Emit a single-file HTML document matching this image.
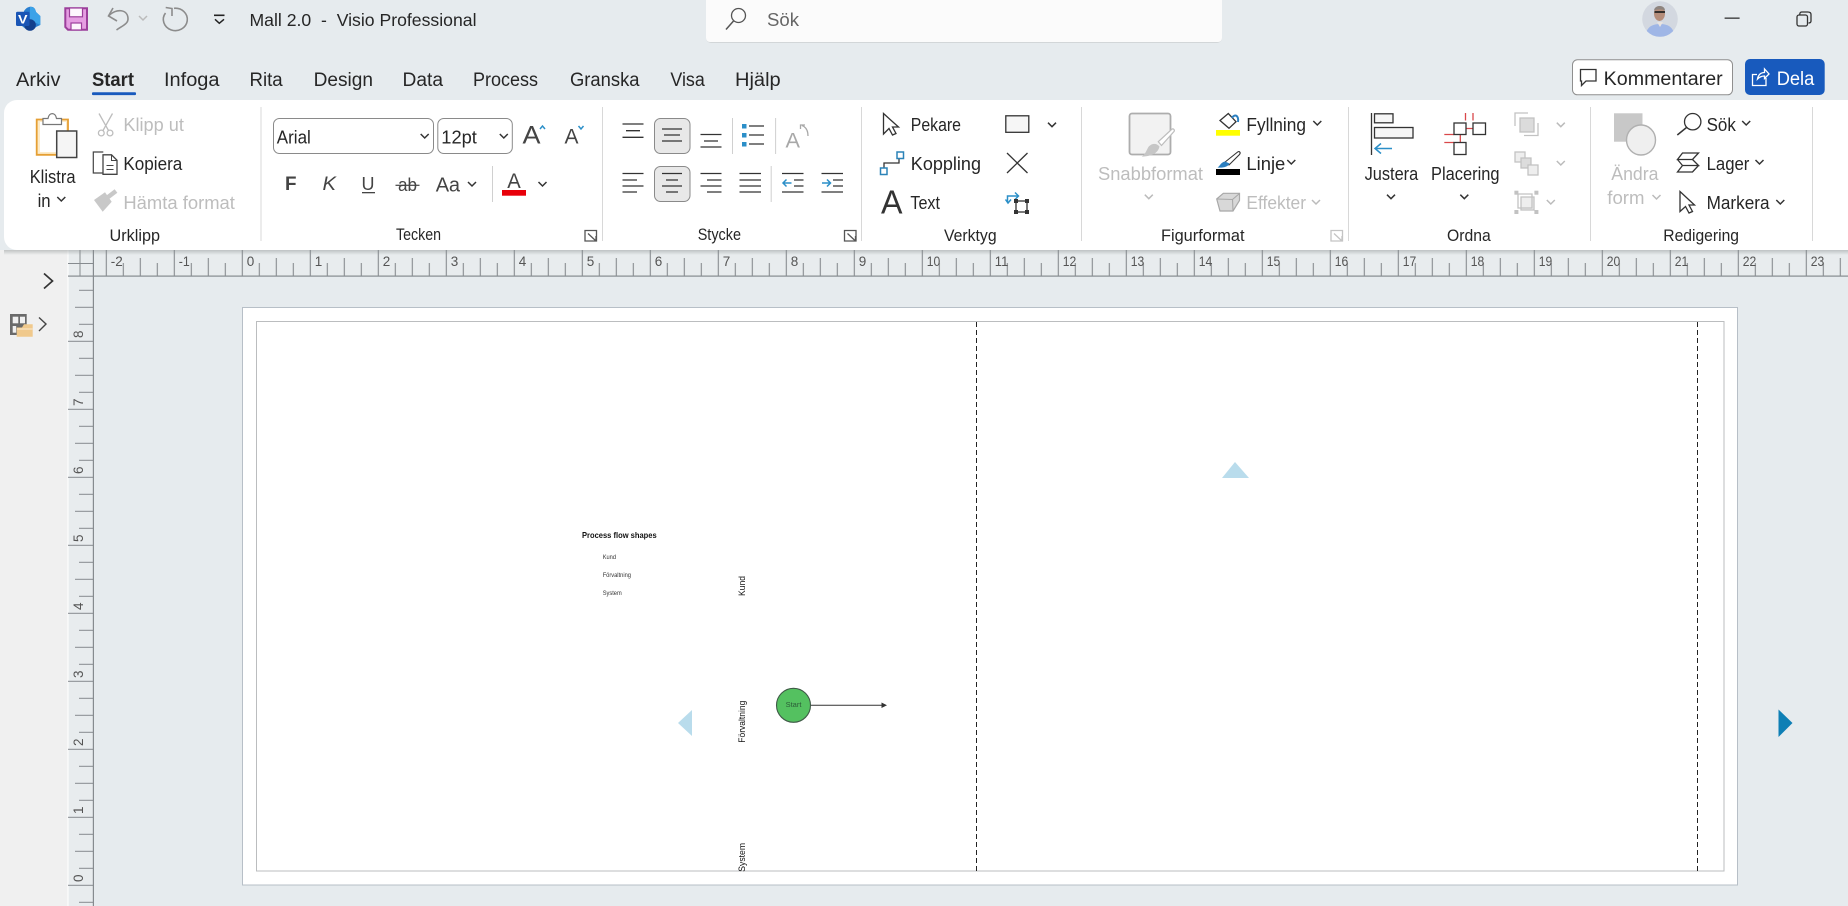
<!DOCTYPE html>
<html lang="sv">
<head>
<meta charset="utf-8">
<title>Mall 2.0 - Visio Professional</title>
<style>
html,body{margin:0;padding:0;width:1848px;height:906px;overflow:hidden;background:#e6ebee}
svg{display:block}
text{font-family:"Liberation Sans",sans-serif;font-size:18.5px;fill:#262626}
.r text{font-size:13.5px;fill:#555}
</style>
</head>
<body>
<svg width="1848" height="906" viewBox="0 0 1848 906" xmlns="http://www.w3.org/2000/svg">
<defs>
<path id="c" d="M-4-2 0 2 4-2" fill="none" stroke="#333" stroke-width="1.5"/>
<path id="cg" d="M-4-2 0 2 4-2" fill="none" stroke="#bbb" stroke-width="1.5"/>
<pattern id="pt" patternUnits="userSpaceOnUse" x="96.3" y="250" width="68" height="26">
<path d="M10 0V26M27 13V26M44 8V26M61 13V26" stroke="#868b8f" stroke-width="1.1" fill="none"/>
</pattern>
<pattern id="pv" patternUnits="userSpaceOnUse" x="68" y="263.3" width="25" height="68">
<path d="M0 10H25M11 27H25M7 44H25M11 61H25" stroke="#868b8f" stroke-width="1.1" fill="none"/>
</pattern>
<linearGradient id="sh" x1="0" y1="0" x2="0" y2="1"><stop offset="0" stop-color="#9aa0a0" stop-opacity=".55"/><stop offset="1" stop-color="#9aa0a0" stop-opacity="0"/></linearGradient>
<clipPath id="av"><circle cx="1660" cy="19" r="17.8"/></clipPath>
</defs>

<!-- backgrounds -->
<rect width="1848" height="906" fill="#e6ebee"/>
<rect x="0" y="250" width="68" height="656" fill="#f0f0f0"/>
<rect x="68" y="250" width="1780" height="26" fill="#e8ecee"/>
<rect x="68" y="250" width="25" height="656" fill="#e8ecee"/>
<rect x="67.5" y="250" width="1" height="656" fill="#fff"/>

<!-- title bar -->
<path d="M24 11C26 8 28 6.7 31 6.7C34 6.7 35.500 9 36 12L40.300 16V25L36 27C34 30 30 31 27 30L22 26z" fill="#2a7fd0"/>
<path d="M30 6.700C33.500 6.700 35.500 9 36 12L40.300 16V25L30 20z" fill="#3ba2e8"/>
<circle cx="30" cy="25" r="5.800" fill="#123f8c"/>
<rect x="16" y="11.700" width="13.500" height="14.300" rx="1.500" fill="#1a55b5"/>
<text x="18" y="23.300" style="font-size:11.500px;font-weight:bold;fill:#fff" textLength="9.500" lengthAdjust="spacingAndGlyphs">V</text>

<path d="M65.300 8.300H87V29.700H68L65.300 27z" fill="#e59ee2" stroke="#9c3f9b" stroke-width="2"/>
<rect x="69.500" y="8" width="13" height="8.800" fill="#fdf6fd" stroke="#9c3f9b" stroke-width="1.200"/>
<rect x="71" y="23" width="10.500" height="7" fill="#fdf6fd" stroke="#9c3f9b" stroke-width="1.200"/>

<g fill="none" stroke="#8c8c8c" stroke-width="1.600">
<path d="M113 8 108.500 16 117 21"/>
<path d="M108.500 16C116 8 128 9 128 19C128 24 122 26 116.500 30"/>
<path d="M165.500 13A12 11.200 0 1 0 174 8.300"/>
<path d="M165.700 7.500 172 8.500 172 16"/>
</g>
<use href="#cg" x="143" y="18"/>
<path d="M214 15.300H224.500" stroke="#222" stroke-width="1.600"/>
<path d="M215 19.300 219.300 23.300 224 19.300" fill="none" stroke="#222" stroke-width="1.500"/>
<text x="249.500" y="26" style="font-size:17.5px" textLength="227" lengthAdjust="spacingAndGlyphs" xml:space="preserve">Mall 2.0  -  Visio Professional</text>

<!-- search -->
<rect x="706" y="-6" width="516" height="49" rx="5" fill="#d2d6d8"/>
<rect x="706" y="-6" width="516" height="48" rx="4" fill="#fbfbfb"/>
<circle cx="738.500" cy="15.500" r="7" fill="none" stroke="#555" stroke-width="1.300"/>
<path d="M733.500 21 726 29.500" stroke="#555" stroke-width="1.500"/>
<text x="767" y="26" style="font-size:18.5px;fill:#666" textLength="32" lengthAdjust="spacingAndGlyphs">Sök</text>

<!-- avatar -->
<g clip-path="url(#av)">
<rect x="1641" y="0" width="38" height="38" fill="#d3d8e0"/>
<path d="M1645 38C1646 27 1652 24 1660 24S1674 27 1675 38z" fill="#9fb6e6"/>
<path d="M1657 22H1663L1660 27z" fill="#e8e3e0"/>
<ellipse cx="1659.500" cy="13.500" rx="5.500" ry="7.500" fill="#b58d7a"/>
<path d="M1654 10.500C1654.500 4.500 1665 4.500 1665 10.500C1662 9 1657 9 1654 10.500z" fill="#8d8580"/>
<path d="M1654.500 12H1665" stroke="#222" stroke-width="1.800"/>
</g>

<!-- window controls -->
<rect x="1724.600" y="17.500" width="15" height="1.300" fill="#333"/>
<rect x="1797" y="15" width="10.500" height="11" rx="2" fill="none" stroke="#333" stroke-width="1.300"/>
<path d="M1799.800 15V14C1799.800 12.700 1800.800 12 1801.800 12H1807.800C1809.800 12 1811 13 1811 14.500V21C1811 22.500 1810 23 1808.500 23" fill="none" stroke="#333" stroke-width="1.300"/>

<!-- tabs -->
<text x="16" y="86" style="font-size:19px" textLength="44.500" lengthAdjust="spacingAndGlyphs">Arkiv</text>
<text x="92" y="86" style="font-size:19px;font-weight:bold" textLength="42" lengthAdjust="spacingAndGlyphs">Start</text>
<text x="164" y="86" style="font-size:19px" textLength="55.500" lengthAdjust="spacingAndGlyphs">Infoga</text>
<text x="249.500" y="86" style="font-size:19px" textLength="33.200" lengthAdjust="spacingAndGlyphs">Rita</text>
<text x="313.600" y="86" style="font-size:19px" textLength="59.400" lengthAdjust="spacingAndGlyphs">Design</text>
<text x="402.500" y="86" style="font-size:19px" textLength="40.500" lengthAdjust="spacingAndGlyphs">Data</text>
<text x="473" y="86" style="font-size:19px" textLength="65" lengthAdjust="spacingAndGlyphs">Process</text>
<text x="570" y="86" style="font-size:19px" textLength="69.500" lengthAdjust="spacingAndGlyphs">Granska</text>
<text x="670.400" y="86" style="font-size:19px" textLength="34.400" lengthAdjust="spacingAndGlyphs">Visa</text>
<text x="735" y="86" style="font-size:19px" textLength="45.700" lengthAdjust="spacingAndGlyphs">Hjälp</text>
<rect x="92" y="92.300" width="44" height="2.800" rx="1" fill="#185abd"/>

<!-- comment / share -->
<rect x="1572.500" y="59.800" width="160" height="35" rx="5" fill="#fff" stroke="#8f8f8f"/>
<path d="M1580.500 69.500H1596V81H1586L1581.500 85.500V81H1580.500z" fill="none" stroke="#333" stroke-width="1.300"/>
<text x="1603.700" y="85" style="font-size:19px" textLength="119" lengthAdjust="spacingAndGlyphs">Kommentarer</text>
<rect x="1745" y="59" width="79.700" height="36" rx="5" fill="#185abd"/>
<path d="M1766 78V85.500H1752.500V74.500H1757M1757.500 79C1758.500 74 1761.500 72.500 1764.500 72.500V69L1769 74 1764.500 78.500V76C1761.500 76 1759.500 77 1757.500 79z" fill="none" stroke="#fff" stroke-width="1.300"/>
<text x="1776.700" y="85" style="font-size:19px;fill:#fff" textLength="37.600" lengthAdjust="spacingAndGlyphs">Dela</text>

<!-- ribbon -->
<rect x="4" y="250" width="1844" height="5" fill="url(#sh)"/>
<rect x="4" y="100" width="1860" height="150" rx="13" fill="#fff"/>
<path d="M261 107V241M602.500 107V241M861.500 107V241M1081.500 107V241M1348.500 107V241M1590.500 107V241M1812.500 107V241" stroke="#d8d8d8" stroke-width="1"/>

<!-- Urklipp -->
<path d="M36.700 119.500H68V154.800H36.700z" fill="#fdebc8" stroke="#e59f34" stroke-width="1.800"/>
<rect x="40" y="122" width="26" height="30" fill="#fff"/>
<path d="M43 124.500V118.500H48C49 112 55.500 112 56.500 118.500H61.500V124.500z" fill="#fff" stroke="#777" stroke-width="1.200"/>
<rect x="56.700" y="131" width="20" height="26.500" fill="#f5f5f5" stroke="#444" stroke-width="1.500"/>
<text x="29.700" y="183" textLength="45.800" lengthAdjust="spacingAndGlyphs">Klistra</text>
<text x="37.600" y="207" textLength="13" lengthAdjust="spacingAndGlyphs">in</text>
<use href="#c" x="61.300" y="199"/>

<g fill="none" stroke="#bdbdbd" stroke-width="1.300">
<path d="M99 113.500 108.500 130.500M112.500 113.500 103 130.500"/><circle cx="101.300" cy="133" r="2.900"/><circle cx="110" cy="133" r="2.900"/>
</g>
<path d="M103.300 152H93.300V173H103" fill="none" stroke="#444" stroke-width="1.200"/>
<path d="M103 154.800H111.500L117 160.300V174.300H103z" fill="#fff" stroke="#444" stroke-width="1.300"/>
<path d="M106.500 165.500H113.500M106.500 169.500H113.500M111.500 155V160.500H117" fill="none" stroke="#444" stroke-width="1"/>
<path d="M94 200 105 192.300 111.700 201.700 102.700 211.700z" fill="#c8c8c8"/>
<path d="M105.500 199 116 191" stroke="#c8c8c8" stroke-width="4.500"/>
<text x="123.400" y="131" style="fill:#bdbdbd" textLength="60.500" lengthAdjust="spacingAndGlyphs">Klipp ut</text>
<text x="123.400" y="170" textLength="58.900" lengthAdjust="spacingAndGlyphs">Kopiera</text>
<text x="123.400" y="209" style="fill:#bdbdbd" textLength="111.500" lengthAdjust="spacingAndGlyphs">Hämta format</text>
<text x="109.500" y="241" style="font-size:17px" textLength="50.500" lengthAdjust="spacingAndGlyphs">Urklipp</text>

<!-- Tecken -->
<rect x="273.500" y="118.500" width="160" height="35" rx="6" fill="#fff" stroke="#8a8a8a"/>
<rect x="437.800" y="118.500" width="74.500" height="35" rx="6" fill="#fff" stroke="#8a8a8a"/>
<text x="276.800" y="143.500" textLength="34" lengthAdjust="spacingAndGlyphs">Arial</text>
<use href="#c" x="424.700" y="136"/>
<text x="441.300" y="143.500" textLength="35.600" lengthAdjust="spacingAndGlyphs">12pt</text>
<use href="#c" x="503.800" y="136"/>
<text x="522.500" y="143.500" style="font-size:25px;fill:#444" textLength="18" lengthAdjust="spacingAndGlyphs">A</text>
<path d="M540 129 542.500 126 545 129" fill="none" stroke="#2b8fc8" stroke-width="1.500"/>
<text x="564.500" y="143.500" style="font-size:21px;fill:#444" textLength="14" lengthAdjust="spacingAndGlyphs">A</text>
<path d="M578.500 126 581 129 583.500 126" fill="none" stroke="#2b8fc8" stroke-width="1.500"/>

<text x="285" y="190" style="font-size:19px;font-weight:bold;fill:#444" textLength="11.500" lengthAdjust="spacingAndGlyphs">F</text>
<text x="322.500" y="190" style="font-size:19px;font-style:italic;fill:#444" textLength="13.500" lengthAdjust="spacingAndGlyphs">K</text>
<text x="361.500" y="190" style="font-size:18.5px;fill:#444" textLength="13" lengthAdjust="spacingAndGlyphs">U</text>
<rect x="362" y="192" width="13" height="1.300" fill="#444"/>
<text x="398" y="191" style="font-size:18.5px;fill:#444" textLength="19" lengthAdjust="spacingAndGlyphs">ab</text>
<rect x="395.500" y="184.700" width="24" height="1.200" fill="#444"/>
<text x="435.700" y="191.500" style="font-size:20px;fill:#444" textLength="24.300" lengthAdjust="spacing">Aa</text>
<use href="#c" x="472" y="184"/>
<rect x="492" y="166" width="1" height="36" fill="#d0d0d0"/>
<text x="507.200" y="188" style="font-size:21px;fill:#444" textLength="13.500" lengthAdjust="spacingAndGlyphs">A</text>
<rect x="502" y="190" width="24" height="5.700" fill="#e8000a"/>
<use href="#c" x="542.500" y="184"/>
<text x="396" y="240" style="font-size:17px" textLength="45" lengthAdjust="spacingAndGlyphs">Tecken</text>
<g fill="none" stroke="#555" stroke-width="1.300"><path d="M585 241V230.500H596.500V241zM588 233.500 596 241M596 236V241H591"/></g>

<!-- Stycke -->
<rect x="654.500" y="118.500" width="35.500" height="35" rx="6" fill="#e8e8e8" stroke="#8a8a8a"/>
<rect x="654.500" y="166.500" width="35.500" height="35" rx="6" fill="#e8e8e8" stroke="#8a8a8a"/>
<g stroke="#333" stroke-width="1.300" fill="none">
<path d="M622.500 124H643.500M626 130.700H640M622.500 137.300H643.500"/>
<path d="M662 129H682M664 135H680M662 141H682"/>
<path d="M700.500 134.500H721.500M704 141H718M700.500 147H721.500"/>
<path d="M749 126H764M749 135H764M749 144H764"/>
<path d="M622.500 173.500H643.500M622.500 180H637M622.500 186H643.500M622.500 192H637"/>
<path d="M662 173.500H682M666 180H678M662 186H682M666 192H678"/>
<path d="M700.500 173.500H721.500M707 180H721.500M700.500 186H721.500M707 192H721.500"/>
<path d="M739.500 173.500H761M739.500 180H761M739.500 186H761M739.500 192H761"/>
<path d="M782 173.500H803.500M794 180H803.500M794 186H803.500M782 192H803.500"/>
<path d="M821.500 173.500H843M833 180H843M833 186H843M821.500 192H843"/>
</g>
<g fill="#2b8fc8"><rect x="742" y="124" width="4.500" height="4.500"/><rect x="742" y="133" width="4.500" height="4.500"/><rect x="742" y="142" width="4.500" height="4.500"/></g>
<g fill="none" stroke="#2b8fc8" stroke-width="1.500">
<path d="M791.500 183H783M786.500 179.500 783 183 786.500 186.500"/>
<path d="M822 183H830.500M827 179.500 830.500 183 827 186.500"/>
</g>
<path d="M732.500 118V154M775.600 118V154M771.200 166V202" stroke="#d0d0d0"/>
<text x="785.500" y="147.700" style="font-size:21px;fill:#a8a8a8" textLength="14.500" lengthAdjust="spacingAndGlyphs">A</text>
<path d="M808 136C808 130 806 127 802 125.500M800.500 129V125H805" fill="none" stroke="#a8a8a8" stroke-width="1.300"/>
<text x="697.700" y="240" style="font-size:17px" textLength="43.300" lengthAdjust="spacingAndGlyphs">Stycke</text>
<g fill="none" stroke="#555" stroke-width="1.300"><path d="M844.500 241V230.500H856V241zM847.500 233.500 855.500 241M855.500 236V241H850.500"/></g>

<!-- Verktyg -->
<path d="M883.500 113.500V134L889 128.500 892.500 135 896 133.500 892.500 127H898.500z" fill="#fff" stroke="#333" stroke-width="1.300"/>
<text x="910.800" y="131" textLength="50.200" lengthAdjust="spacingAndGlyphs">Pekare</text>
<path d="M884 168V163H899V158" fill="none" stroke="#333" stroke-width="1.300"/>
<rect x="880.500" y="168" width="6.500" height="6.500" fill="#fff" stroke="#2b83b8" stroke-width="1.500"/>
<rect x="897" y="152" width="6.500" height="6.500" fill="#fff" stroke="#2b83b8" stroke-width="1.500"/>
<text x="910.800" y="170" textLength="70.200" lengthAdjust="spacingAndGlyphs">Koppling</text>
<text x="881" y="213.500" style="font-size:33px;fill:#333;font-weight:normal" textLength="21.500" lengthAdjust="spacingAndGlyphs">A</text>
<text x="910.400" y="209" textLength="29.600" lengthAdjust="spacingAndGlyphs">Text</text>
<rect x="1005.800" y="115.800" width="23" height="16.500" fill="#f6f6f6" stroke="#333" stroke-width="1.300"/>
<use href="#c" x="1052" y="124.700"/>
<path d="M1007 153 1027.500 173M1027.500 153 1007 173" stroke="#333" stroke-width="1.300"/>
<path d="M1007.500 202V196H1018M1015 192.500 1018.500 196 1015 199.500" fill="none" stroke="#2b8fc8" stroke-width="1.500"/>
<path d="M1005.500 199.500 1008 203 1011 199.500" fill="none" stroke="#2b8fc8" stroke-width="1.500"/>
<rect x="1016" y="201" width="11" height="11" fill="none" stroke="#333" stroke-width="1.300"/>
<g fill="#333"><rect x="1014" y="199" width="4" height="4"/><rect x="1025" y="199" width="4" height="4"/><rect x="1014" y="210" width="4" height="4"/><rect x="1025" y="210" width="4" height="4"/></g>
<text x="944" y="241" style="font-size:17px" textLength="52.600" lengthAdjust="spacingAndGlyphs">Verktyg</text>

<!-- Figurformat -->
<rect x="1129.500" y="113.500" width="41" height="41" rx="2.500" fill="#f2f2f2" stroke="#adadad" stroke-width="1.800"/>
<path d="M1158.300 141.700 1171.500 129.500C1173.500 128 1175 130 1174 131.500L1161.500 145.500z" fill="#fff" stroke="#bdbdbd" stroke-width="1.200"/>
<path d="M1141.700 156.700C1147 153 1147 147 1150 145.500C1153 143 1157 143.500 1159.500 146.500C1158.500 151 1155 156 1141.700 156.700z" fill="#c6c6c6"/>
<text x="1098" y="180" style="fill:#bdbdbd" textLength="105" lengthAdjust="spacingAndGlyphs">Snabbformat</text>
<use href="#cg" x="1148.800" y="196.700"/>
<path d="M1220 120.500 1228.300 113.500 1236 121.700 1229 128.300z" fill="#fff" stroke="#333" stroke-width="1.300"/>
<path d="M1232 118C1235 113 1239 116 1238 122" fill="none" stroke="#2b7fc0" stroke-width="2"/>
<rect x="1216" y="130" width="24" height="5.700" fill="#ffff00"/>
<text x="1246.400" y="131" textLength="59.600" lengthAdjust="spacingAndGlyphs">Fyllning</text>
<use href="#c" x="1317.300" y="123"/>
<path d="M1224.500 162.500 1237 152.500C1239.500 150.500 1241 152.500 1239.500 154.500L1229 165z" fill="#fff" stroke="#333" stroke-width="1.100"/>
<path d="M1217.500 167.500C1220 166 1221 162 1225 161.500L1229.500 163.500C1228 167 1223 168 1217.500 167.500z" fill="#2b7fc0"/>
<rect x="1216" y="169" width="24" height="6" fill="#000"/>
<text x="1246.400" y="170" textLength="38.900" lengthAdjust="spacingAndGlyphs">Linje</text>
<use href="#c" x="1291.300" y="162"/>
<path d="M1216.700 199 1223.300 193.300H1239.500V200.500L1233 211H1220z" fill="#d8d8d8" stroke="#a8a8a8" stroke-width="1.200"/>
<path d="M1216.700 199 1232.500 199.500 1239.500 193.500M1232.500 199.500 1233 211" fill="none" stroke="#a8a8a8" stroke-width="1.100"/>
<text x="1246.400" y="209" style="fill:#bdbdbd" textLength="59.600" lengthAdjust="spacingAndGlyphs">Effekter</text>
<use href="#cg" x="1316" y="202"/>
<text x="1161" y="241" style="font-size:17px" textLength="83.500" lengthAdjust="spacingAndGlyphs">Figurformat</text>
<g fill="none" stroke="#c4c4c4" stroke-width="1.300"><path d="M1331 241V230.500H1342.500V241zM1334 233.500 1342 241M1342 236V241H1337"/></g>

<!-- Ordna -->
<path d="M1371.500 113V155" stroke="#333" stroke-width="1.300"/>
<rect x="1374.500" y="113.800" width="18.500" height="9" fill="#f6f6f6" stroke="#333" stroke-width="1.300"/>
<rect x="1374.500" y="127.500" width="38.500" height="10.500" fill="#f6f6f6" stroke="#333" stroke-width="1.300"/>
<path d="M1392 148.500H1375M1381 143.500 1375 148.500 1381 153.500" fill="none" stroke="#2b8fc8" stroke-width="1.500"/>
<text x="1364.600" y="180" textLength="53.600" lengthAdjust="spacingAndGlyphs">Justera</text>
<use href="#c" x="1391" y="196.700"/>
<path d="M1465.500 113V120.500M1473 113V120.500M1466 128.500H1473.500M1460.300 134.500V142.500M1444.300 134.500H1454M1444.300 142.500H1454" stroke="#d9474a" stroke-width="1.300" fill="none"/>
<g fill="#fff" stroke="#333" stroke-width="1.300"><rect x="1454" y="123" width="12" height="11.500"/><rect x="1473" y="123" width="12.500" height="11.500"/><rect x="1454" y="142.500" width="12" height="12"/></g>
<text x="1431" y="180" textLength="68.500" lengthAdjust="spacingAndGlyphs">Placering</text>
<use href="#c" x="1464.300" y="196.700"/>
<g fill="#dcdcdc" stroke="#c2c2c2" stroke-width="1.300">
<path d="M1515 126V113H1528" fill="none"/><rect x="1520" y="118" width="14" height="14"/><path d="M1538 123V135.500H1524" fill="none"/>
<rect x="1515" y="152" width="10" height="10" fill="#eee"/><rect x="1521" y="158" width="10" height="10"/><rect x="1528" y="165" width="10" height="10" fill="#eee"/>
<rect x="1521" y="197" width="13" height="13" fill="#eee"/><path d="M1518 194H1532V208H1518z" fill="none"/>
</g>
<g fill="#c2c2c2"><rect x="1514.400" y="190.700" width="4" height="4"/><rect x="1534.400" y="190.700" width="4" height="4"/><rect x="1514.400" y="210" width="4" height="4"/><rect x="1534.400" y="210" width="4" height="4"/></g>
<use href="#cg" x="1560.800" y="124.700"/><use href="#cg" x="1560.800" y="163"/><use href="#cg" x="1550.800" y="202"/>
<text x="1447" y="241" style="font-size:17px" textLength="43.700" lengthAdjust="spacingAndGlyphs">Ordna</text>

<!-- Redigering -->
<rect x="1614" y="113.300" width="28.500" height="28.400" fill="#c8c8c8"/>
<ellipse cx="1641" cy="140" rx="14.500" ry="15" fill="#efefef" stroke="#b0b0b0" stroke-width="1.400"/>
<text x="1611.300" y="180" style="fill:#bdbdbd" textLength="47.200" lengthAdjust="spacingAndGlyphs">Ändra</text>
<text x="1607.300" y="204" style="fill:#bdbdbd" textLength="37.200" lengthAdjust="spacingAndGlyphs">form</text>
<use href="#cg" x="1656.500" y="197"/>
<circle cx="1692.700" cy="121.700" r="8.200" fill="none" stroke="#333" stroke-width="1.300"/>
<path d="M1686.500 127.500 1677.300 135" stroke="#333" stroke-width="1.500"/>
<text x="1706.600" y="131" textLength="29.200" lengthAdjust="spacingAndGlyphs">Sök</text>
<use href="#c" x="1746.200" y="123"/>
<path d="M1682.500 153H1698.500L1692.500 159.500H1677.500zM1677.500 159.500 1682.500 165.500H1698.500L1692.500 159.500M1682.500 165.500 1677.500 172H1692.500L1698.500 165.500" fill="none" stroke="#333" stroke-width="1.300"/>
<text x="1706.600" y="170" textLength="42.800" lengthAdjust="spacingAndGlyphs">Lager</text>
<use href="#c" x="1759.500" y="162"/>
<path d="M1680 191.500V211.500L1685.500 206.500 1689 213 1692.500 211.500 1689 205H1694.500z" fill="#fff" stroke="#333" stroke-width="1.300"/>
<text x="1706.600" y="209" textLength="62.900" lengthAdjust="spacingAndGlyphs">Markera</text>
<use href="#c" x="1780.300" y="202"/>
<text x="1663.300" y="241" style="font-size:17px" textLength="75.700" lengthAdjust="spacingAndGlyphs">Redigering</text>

<!-- sidebar -->
<path d="M44 273.500 52.500 281 44 288.500" fill="none" stroke="#333" stroke-width="1.700"/>
<rect x="10" y="314" width="16.700" height="21" fill="#6a6a6a"/>
<rect x="12.700" y="316.700" width="5.600" height="6.600" fill="#f0f0f0"/><rect x="20" y="316.700" width="5" height="6.600" fill="#f0f0f0"/><rect x="12.700" y="326" width="3.500" height="6.700" fill="#f0f0f0"/>
<path d="M16.700 327.500H22L24 324.300H32.700V336.700H16.700z" fill="#f0c98c"/>
<path d="M17 329H32.500" stroke="#fbe6c4" stroke-width="1.200"/>
<path d="M39 317.500 46 324 39 331" fill="none" stroke="#444" stroke-width="1.400"/>

<!-- rulers -->
<rect x="93" y="250" width="1755" height="26" fill="url(#pt)"/>
<rect x="68" y="276" width="25" height="630" fill="url(#pv)"/>
<rect x="68" y="275.500" width="1780" height="1.200" fill="#868b8f"/>
<rect x="92.800" y="250" width="1.200" height="656" fill="#868b8f"/>
<path d="M80 250V276M68 263.500H93" stroke="#868b8f" stroke-width="1"/>
<g class="r">
<text x="110.800" y="266" textLength="12" lengthAdjust="spacingAndGlyphs">-2</text>
<text x="178.800" y="266" textLength="11" lengthAdjust="spacingAndGlyphs">-1</text>
<text x="246.800" y="266">0</text><text x="314.800" y="266">1</text><text x="382.800" y="266">2</text><text x="450.800" y="266">3</text><text x="518.800" y="266">4</text><text x="586.800" y="266">5</text><text x="654.800" y="266">6</text><text x="722.800" y="266">7</text><text x="790.800" y="266">8</text><text x="858.800" y="266">9</text>
<text x="926.800" y="266" textLength="13.500" lengthAdjust="spacingAndGlyphs">10</text>
<text x="994.800" y="266" textLength="13.500" lengthAdjust="spacingAndGlyphs">11</text>
<text x="1062.800" y="266" textLength="13.500" lengthAdjust="spacingAndGlyphs">12</text>
<text x="1130.800" y="266" textLength="13.500" lengthAdjust="spacingAndGlyphs">13</text>
<text x="1198.800" y="266" textLength="13.500" lengthAdjust="spacingAndGlyphs">14</text>
<text x="1266.800" y="266" textLength="13.500" lengthAdjust="spacingAndGlyphs">15</text>
<text x="1334.800" y="266" textLength="13.500" lengthAdjust="spacingAndGlyphs">16</text>
<text x="1402.800" y="266" textLength="13.500" lengthAdjust="spacingAndGlyphs">17</text>
<text x="1470.800" y="266" textLength="13.500" lengthAdjust="spacingAndGlyphs">18</text>
<text x="1538.800" y="266" textLength="13.500" lengthAdjust="spacingAndGlyphs">19</text>
<text x="1606.800" y="266" textLength="13.500" lengthAdjust="spacingAndGlyphs">20</text>
<text x="1674.800" y="266" textLength="13.500" lengthAdjust="spacingAndGlyphs">21</text>
<text x="1742.800" y="266" textLength="13.500" lengthAdjust="spacingAndGlyphs">22</text>
<text x="1810.800" y="266" textLength="13.500" lengthAdjust="spacingAndGlyphs">23</text>
<text transform="translate(83,878.300) rotate(-90)" text-anchor="middle">0</text>
<text transform="translate(83,810.300) rotate(-90)" text-anchor="middle">1</text>
<text transform="translate(83,742.300) rotate(-90)" text-anchor="middle">2</text>
<text transform="translate(83,674.300) rotate(-90)" text-anchor="middle">3</text>
<text transform="translate(83,606.300) rotate(-90)" text-anchor="middle">4</text>
<text transform="translate(83,538.300) rotate(-90)" text-anchor="middle">5</text>
<text transform="translate(83,470.300) rotate(-90)" text-anchor="middle">6</text>
<text transform="translate(83,402.300) rotate(-90)" text-anchor="middle">7</text>
<text transform="translate(83,334.300) rotate(-90)" text-anchor="middle">8</text>
</g>

<!-- page -->
<rect x="242.500" y="307.500" width="1495" height="577.500" fill="#fff" stroke="#b7bfc7" stroke-width="1"/>
<rect x="256.500" y="321.500" width="1467.500" height="549.500" fill="#fff" stroke="#bbbdbf" stroke-width="1"/>
<path d="M976.500 322V871M1697.500 322V871" stroke="#222" stroke-width="1" stroke-dasharray="5 3"/>

<!-- connection arrows -->
<path d="M1222 478 1235 462 1249 478z" fill="#b9dcec"/>
<path d="M678 723 692 710V736z" fill="#b9dcec"/>
<path d="M1778.500 709.500 1792.500 723 1778.500 737z" fill="#0e7fb5"/>

<!-- diagram -->
<text x="582" y="538" style="font-size:8.5px;font-weight:bold;fill:#111" textLength="74.700" lengthAdjust="spacingAndGlyphs">Process flow shapes</text>
<text x="602.700" y="559" style="font-size:6.5px;fill:#333" textLength="13.300" lengthAdjust="spacingAndGlyphs">Kund</text>
<text x="602.700" y="577" style="font-size:6.5px;fill:#333" textLength="28.300" lengthAdjust="spacingAndGlyphs">Förvaltning</text>
<text x="602.700" y="595" style="font-size:6.5px;fill:#333" textLength="19" lengthAdjust="spacingAndGlyphs">System</text>
<text transform="translate(745,596) rotate(-90)" style="font-size:9.5px;fill:#111" textLength="20" lengthAdjust="spacingAndGlyphs">Kund</text>
<text transform="translate(745,742.700) rotate(-90)" style="font-size:9.5px;fill:#111" textLength="42" lengthAdjust="spacingAndGlyphs">Förvaltning</text>
<text transform="translate(745,871.700) rotate(-90)" style="font-size:9.5px;fill:#111" textLength="28.700" lengthAdjust="spacingAndGlyphs">System</text>
<circle cx="793.500" cy="705.300" r="17" fill="#54c160" stroke="#3f5a47" stroke-width="1.100"/>
<text x="793.500" y="707" text-anchor="middle" style="font-size:7.5px;fill:#2c5c38">Start</text>
<path d="M811 705.300H882" stroke="#333" stroke-width="1"/>
<path d="M881.500 702.500 887 705.300 881.500 708z" fill="#333"/>
</svg>
</body>
</html>
